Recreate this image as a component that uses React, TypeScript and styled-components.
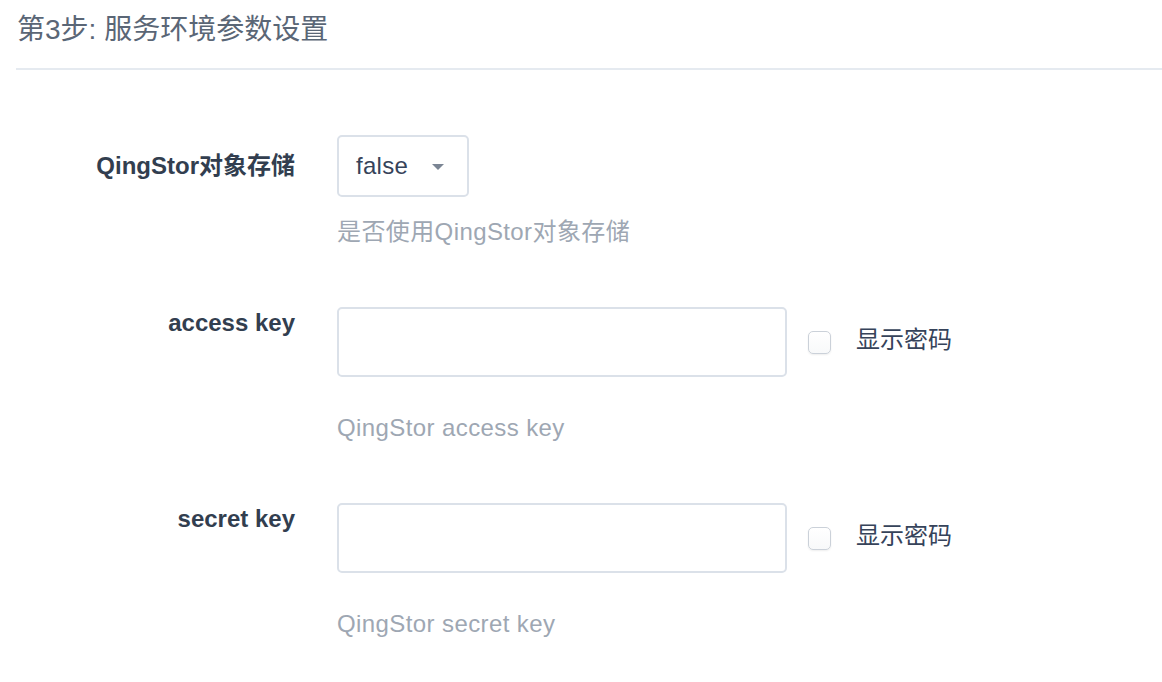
import React from "react";
import styled, { createGlobalStyle } from "styled-components";

const GlobalStyle = createGlobalStyle`
  html, body {
    margin: 0;
    padding: 0;
    background: #ffffff;
  }
  body {
    font-family: "Liberation Sans", "Noto Sans CJK SC", sans-serif;
    -webkit-font-smoothing: antialiased;
  }
`;

const Page = styled.div`
  padding-left: 16px;
  width: 1146px;
`;

const Header = styled.div`
  padding-top: 10px;
  padding-bottom: 18px;
  border-bottom: 2px solid #e5eaf0;
`;

const Title = styled.h2`
  margin: 0;
  padding-left: 1px;
  font-size: 28px;
  line-height: 40px;
  font-weight: 400;
  color: #5a6676;
`;

const Form = styled.div`
  padding-top: 65px;
  display: flex;
  flex-direction: column;
  gap: 59px;
`;

const Row = styled.div`
  display: flex;
  align-items: flex-start;
`;

const Label = styled.div<{ $offset: number }>`
  width: 279px;
  flex: none;
  text-align: right;
  font-size: 24px;
  line-height: 32px;
  font-weight: 700;
  color: #323e4f;
  padding-top: ${(p) => p.$offset}px;
`;

const Control = styled.div`
  margin-left: 42px;
  display: flex;
  flex-direction: column;
`;

const Line = styled.div`
  display: flex;
  align-items: center;
`;

const Select = styled.div`
  box-sizing: border-box;
  width: 132px;
  height: 62px;
  border: 2px solid #dbe1e9;
  border-radius: 5px;
  display: flex;
  align-items: center;
  justify-content: space-between;
  padding: 0 23px 0 17px;
  font-size: 24px;
  letter-spacing: 0.3px;
  color: #36435a;
  background: #fff;
`;

const Caret = styled.span`
  width: 0;
  height: 0;
  border-left: 6px solid transparent;
  border-right: 6px solid transparent;
  border-top: 6px solid #7b8594;
  margin-top: 2px;
`;

const TextInput = styled.input`
  box-sizing: border-box;
  width: 450px;
  height: 70px;
  border: 2px solid #dbe1e9;
  border-radius: 5px;
  padding: 0 16px;
  font-size: 24px;
  font-family: inherit;
  color: #36435a;
  outline: none;
  background: #fff;
`;

const Check = styled.span`
  box-sizing: border-box;
  width: 23px;
  height: 23px;
  margin-left: 21px;
  border: 1px solid #cbd1d9;
  border-radius: 5px;
  background: linear-gradient(#ffffff, #f8f9fa);
  box-shadow: 0 1px 2px rgba(0, 0, 0, 0.07);
`;

const CheckText = styled.span`
  margin-left: 25px;
  font-size: 24px;
  line-height: 32px;
  color: #36435a;
  margin-top: -4px;
`;

const Help = styled.div<{ $gap: number }>`
  margin-top: ${(p) => p.$gap}px;
  font-size: 24px;
  line-height: 32px;
  letter-spacing: 0.4px;
  color: #9ea7b3;
`;

const KeyField: React.FC<{ label: string; help: string }> = ({ label, help }) => (
  <Row>
    <Label $offset={0}>{label}</Label>
    <Control>
      <Line>
        <TextInput type="password" />
        <Check />
        <CheckText>显示密码</CheckText>
      </Line>
      <Help $gap={35}>{help}</Help>
    </Control>
  </Row>
);

export default function App() {
  return (
    <>
      <GlobalStyle />
      <Page>
        <Header>
          <Title>第3步: 服务环境参数设置</Title>
        </Header>
        <Form>
          <Row>
            <Label $offset={15}>QingStor对象存储</Label>
            <Control>
              <Select>
                <span>false</span>
                <Caret />
              </Select>
              <Help $gap={19}>是否使用QingStor对象存储</Help>
            </Control>
          </Row>
          <KeyField label="access key" help="QingStor access key" />
          <KeyField label="secret key" help="QingStor secret key" />
        </Form>
      </Page>
    </>
  );
}
